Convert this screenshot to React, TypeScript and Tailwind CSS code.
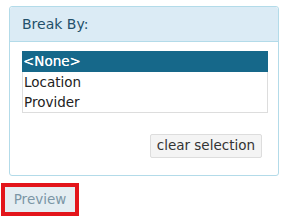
const font = { fontFamily: '"DejaVu Sans", Verdana, sans-serif' };

export default function App() {
  const options = ["<None>", "Location", "Provider"];
  return (
    <div className="w-[286px] h-[216px] bg-white overflow-hidden" style={font}>
      <div className="ml-[9px] pt-[6px]">
        <div className="w-[270px] h-[170px] rounded-[3px] border border-[#b3dbe9] bg-white flex flex-col">
          <div className="h-[35px] bg-[#dbebf5] border-b border-[#b3dbe9] flex items-center pl-[12px] text-[14px] text-[#23506a] rounded-t-[3px]">
            Break By:
          </div>
          <div className="flex flex-col pl-[12px] pr-[10px] pt-[9px]">
            <div className="h-[62px] border border-[#dddddd] flex flex-col">
              {options.map((o, i) => (
                <div
                  key={o}
                  className={
                    i === 0
                      ? "h-[21px] leading-[21px] pl-[1px] -mt-px -mx-px text-[13.5px] text-white bg-[#16688a] [text-shadow:0_0_0.5px_#ffffff]"
                      : "h-[20px] leading-[20px] pl-[1px] text-[13.5px] text-[#222222]"
                  }
                >
                  {o}
                </div>
              ))}
            </div>
            <div className="flex justify-end mt-[21px] pr-[6px]">
              <button className="h-[24px] px-[6px] bg-[#f4f4f4] border border-[#dddddd] rounded-[2px] text-[13.5px] text-[#333333] leading-none">
                clear selection
              </button>
            </div>
          </div>
        </div>
      </div>
      <div className="ml-[1px] mt-[7px] w-[78px] border-[4px] border-[#e3151b]">
        <button className="w-full h-[25px] bg-[#e4edf2] text-[13.5px] text-[#7b96a6] leading-none">
          Preview
        </button>
      </div>
    </div>
  );
}
